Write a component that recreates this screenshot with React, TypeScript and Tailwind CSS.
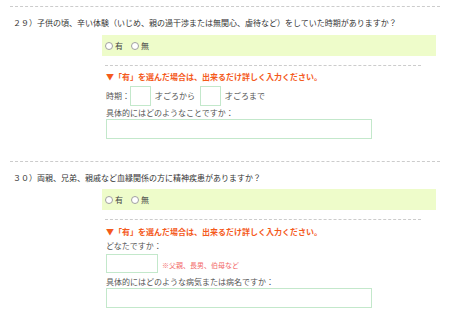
import React from "react";

const font = { fontFamily: '"Noto Sans CJK JP", "Noto Sans", sans-serif' };

function Radio({ label }: { label: string }) {
  return (
    <span className="flex items-center">
      <span className="w-[8px] h-[8px] rounded-full border border-[#a0a0a0] bg-white" />
      <span className="ml-[2px] text-[8px] leading-[12px] text-[#444]">{label}</span>
    </span>
  );
}

function Radios() {
  return (
    <div className="ml-[92px] w-[334px] h-[21px] bg-[#eefcca] flex items-center pl-[3px] gap-[8px]">
      <Radio label="有" />
      <Radio label="無" />
    </div>
  );
}

function Note() {
  return (
    <div className="h-[12px] text-[8px] leading-[12px] font-bold text-[#f45a1c] whitespace-nowrap">
      ▼「有」を選んだ場合は、出来るだけ詳しく入力ください。
    </div>
  );
}

export default function App() {
  return (
    <div className="w-[450px] h-[320px] bg-white overflow-hidden px-[10px]" style={font}>
      {/* Q29 */}
      <div className="mt-[6px] border-t border-dashed border-[#cccccc]">
        <div className="mt-[10px] ml-[3px] h-[12px] text-[8px] leading-[12px] text-[#333] whitespace-nowrap">
          ２９）子供の頃、辛い体験（いじめ、親の過干渉または無関心、虐待など）をしていた時期がありますか？
        </div>
        <div className="mt-[6px]">
          <Radios />
        </div>
        <div className="ml-[95px] w-[316px] mt-[9px] border-t border-dashed border-[#cccccc]" />
        <div className="ml-[96px]">
          <div className="mt-[5px]">
            <Note />
          </div>
          <div className="mt-[3px] flex items-center h-[20px] text-[8px] text-[#555]">
            <span>時期：</span>
            <span className="ml-[0px] w-[21px] h-[20px] border border-[#c3e8cb] bg-white" />
            <span className="ml-[4px]">才ごろから</span>
            <span className="ml-[5px] w-[21px] h-[20px] border border-[#c3e8cb] bg-white" />
            <span className="ml-[4px]">才ごろまで</span>
          </div>
          <div className="mt-[1px] h-[12px] text-[8px] leading-[12px] text-[#555]">
            具体的にはどのようなことですか：
          </div>
          <div className="w-[266px] h-[20px] border border-[#c3e8cb] bg-white" />
        </div>
      </div>

      {/* Q30 */}
      <div className="mt-[22px] border-t border-dashed border-[#cccccc]">
        <div className="mt-[10px] ml-[3px] h-[12px] text-[8px] leading-[12px] text-[#333] whitespace-nowrap">
          ３０）両親、兄弟、親戚など血縁関係の方に精神疾患がありますか？
        </div>
        <div className="mt-[5px]">
          <Radios />
        </div>
        <div className="ml-[95px] w-[316px] mt-[9px] border-t border-dashed border-[#cccccc]" />
        <div className="ml-[96px]">
          <div className="mt-[6px]">
            <Note />
          </div>
          <div className="mt-[2px] h-[12px] text-[8px] leading-[12px] text-[#555]">どなたですか：</div>
          <div className="mt-[2px] flex items-center">
            <span className="w-[52px] h-[19px] border border-[#c3e8cb] bg-white" />
            <span className="ml-[4px] mt-[2px] text-[7px] leading-[10px] text-[#f26a6a] whitespace-nowrap">
              ※父親、長男、伯母など
            </span>
          </div>
          <div className="mt-[3px] h-[12px] text-[8px] leading-[12px] text-[#555]">
            具体的にはどのような病気または病名ですか：
          </div>
          <div className="w-[266px] h-[20px] border border-[#c3e8cb] bg-white" />
        </div>
      </div>
    </div>
  );
}
